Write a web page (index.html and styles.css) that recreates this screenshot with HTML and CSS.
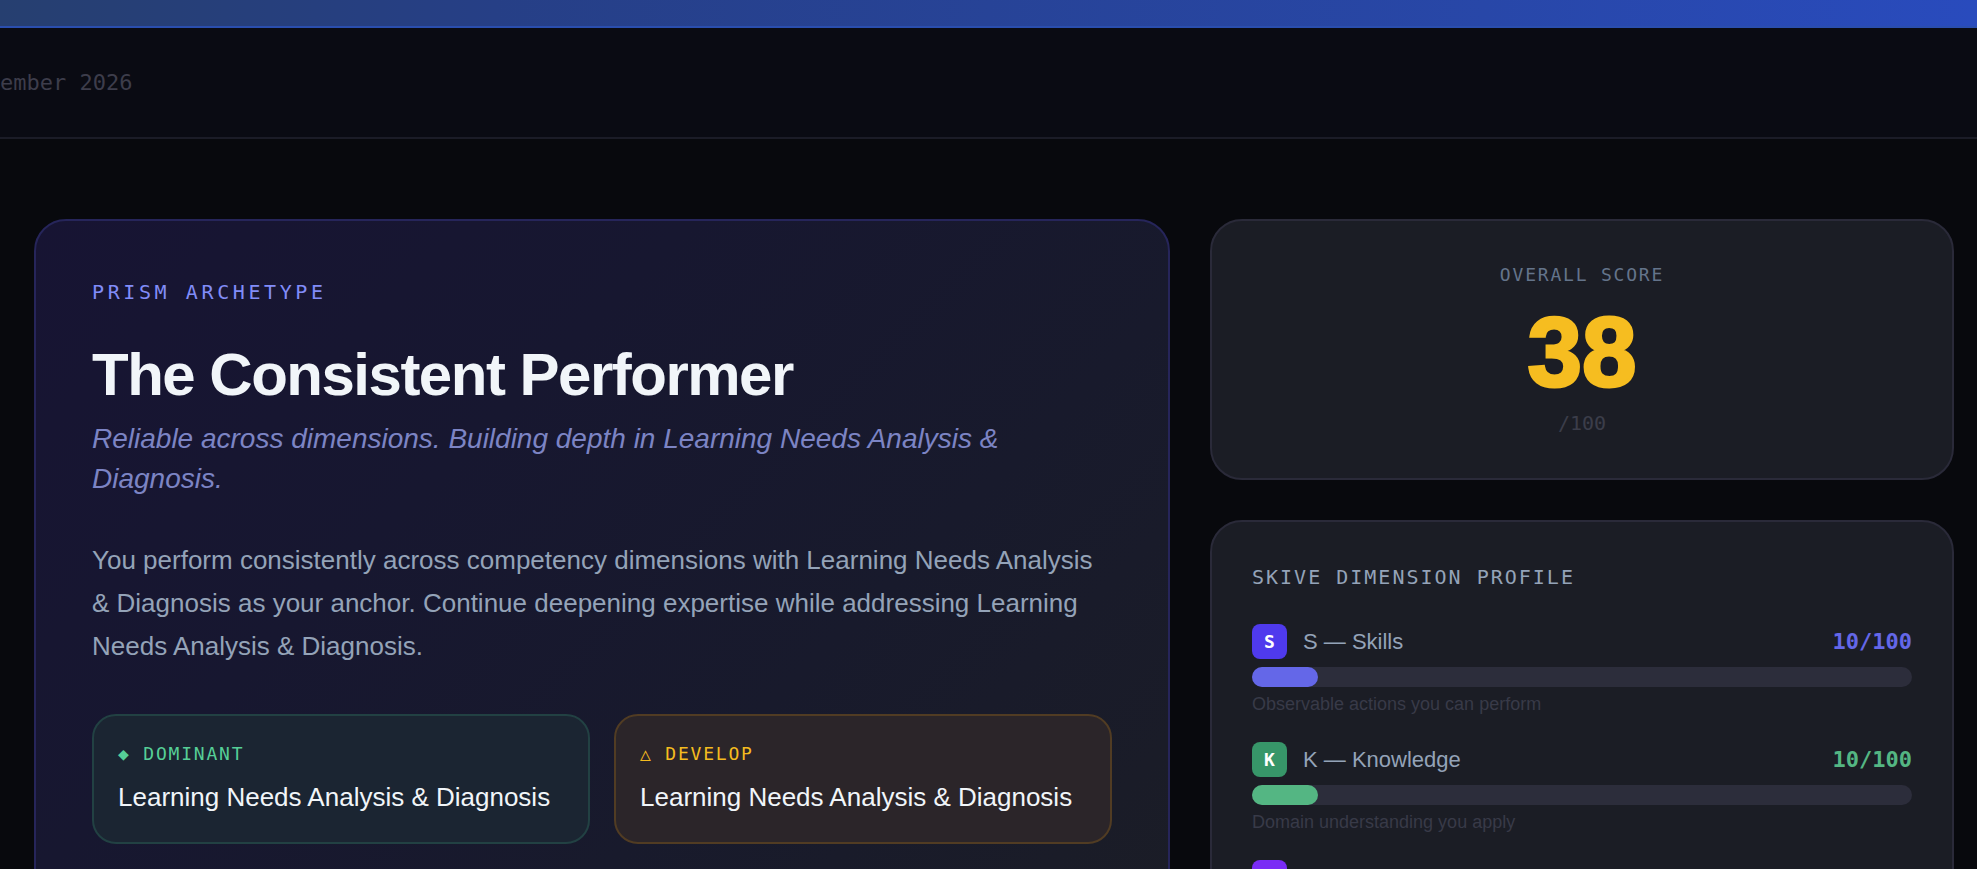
FILE: index.html
```html
<!DOCTYPE html>
<html lang="en">
<head>
<meta charset="utf-8">
<meta name="viewport" content="width=device-width, initial-scale=1">
<title>Prism Archetype Report</title>
<link rel="stylesheet" href="styles.css">
</head>
<body>
<div class="banner"></div>
<header class="meta"><span class="meta-date">ember 2026</span></header>
<main class="report">
  <section class="card archetype">
    <p class="eyebrow">PRISM ARCHETYPE</p>
    <h1 class="title">The Consistent Performer</h1>
    <p class="tagline">Reliable across dimensions. Building depth in Learning Needs Analysis &amp; Diagnosis.</p>
    <p class="summary">You perform consistently across competency dimensions with Learning Needs Analysis &amp; Diagnosis as your anchor. Continue deepening expertise while addressing Learning Needs Analysis &amp; Diagnosis.</p>
    <div class="traits">
      <div class="trait trait-dominant">
        <p class="trait-label">◆ DOMINANT</p>
        <p class="trait-value">Learning Needs Analysis &amp; Diagnosis</p>
      </div>
      <div class="trait trait-develop">
        <p class="trait-label">△ DEVELOP</p>
        <p class="trait-value">Learning Needs Analysis &amp; Diagnosis</p>
      </div>
    </div>
  </section>
  <div class="side">
    <section class="card score">
      <p class="score-label">OVERALL SCORE</p>
      <p class="score-value">38</p>
      <p class="score-max">/100</p>
    </section>
    <section class="card profile">
      <h2 class="profile-title">SKIVE DIMENSION PROFILE</h2>
      <ul class="dimensions">
        <li class="dimension skills">
          <div class="dimension-head"><span class="badge">S</span><span class="name">S — Skills</span><span class="points">10/100</span></div>
          <div class="track"><div class="fill" style="width:10%"></div></div>
          <p class="hint">Observable actions you can perform</p>
        </li>
        <li class="dimension knowledge">
          <div class="dimension-head"><span class="badge">K</span><span class="name">K — Knowledge</span><span class="points">10/100</span></div>
          <div class="track"><div class="fill" style="width:10%"></div></div>
          <p class="hint">Domain understanding you apply</p>
        </li>
        <li class="dimension third">
          <div class="dimension-head"><span class="badge"></span></div>
          <div class="track"><div class="fill" style="width:10%"></div></div>
        </li>
      </ul>
    </section>
  </div>
</main>
</body>
</html>
```
FILE: styles.css
```css
:root {
  --sans: "Liberation Sans", Arial, sans-serif;
  --mono: "DejaVu Sans Mono", "Liberation Mono", monospace;
}
* { box-sizing: border-box; }
html { height: 100%; }
body {
  margin: 0;
  height: 100%;
  overflow: hidden;
  background: #08090d;
  color: #f1f5f9;
  font-family: var(--sans);
}
h1, h2, p, ul { margin: 0; padding: 0; }
ul { list-style: none; }

.banner {
  height: 28px;
  background: linear-gradient(90deg, #263f70, #263f86 25%, #2847a8 75%, #294bbd);
  border-bottom: 2px solid #2a4eae;
}
.meta {
  padding: 40px 0;
  background: #0a0b13;
  border-bottom: 2px solid #1b1c27;
  font: 22px/29px var(--mono);
  color: #3d3d4b;
}
.meta-date { display: block; }

.report {
  display: grid;
  grid-template-columns: minmax(0, 142fr) minmax(0, 93fr);
  gap: 40px;
  padding: 80px 23px 80px 34px;
}
.card {
  border: 2px solid #2a2a39;
  border-radius: 32px;
  background: #1b1d25;
  padding: 40px;
}
.side { display: flex; flex-direction: column; gap: 40px; }

.archetype {
  padding: 56px;
  border-color: #26255a;
  background: linear-gradient(135deg, #171433, #171730 35%, #181a2c 65%, #1b1d26);
}
.eyebrow {
  font: 20px/30px var(--mono);
  letter-spacing: 0.18em;
  color: #818cf8;
}
.title {
  margin-top: 32px;
  font-size: 60px;
  line-height: 72px;
  letter-spacing: -0.025em;
}
.tagline {
  margin-top: 8px;
  font-size: 28px;
  line-height: 40px;
  font-style: italic;
  color: #7c84c4;
}
.summary {
  margin-top: 40px;
  font-size: 26px;
  line-height: 43px;
  color: #94a3b8;
}
.traits {
  display: grid;
  grid-template-columns: 1fr 1fr;
  gap: 24px;
  margin-top: 46px;
}
.trait {
  padding: 24px;
  border: 2px solid;
  border-radius: 24px;
}
.trait-dominant { background: #1b2532; border-color: #224143; }
.trait-develop { background: #2b2529; border-color: #513c23; }
.trait-label {
  font: 18px/28px var(--mono);
  letter-spacing: 0.1em;
}
.trait-dominant .trait-label { color: #56cf97; }
.trait-develop .trait-label { color: #f5bc1f; }
.trait-value { margin-top: 8px; font-size: 26px; line-height: 42px; }

.score { text-align: center; }
.score-label {
  font: 18px/27px var(--mono);
  letter-spacing: 0.1em;
  color: #64748b;
}
.score-value {
  margin: 16px 0 8px;
  font: bold 98px/96px var(--sans);
  color: #f6bd20;
  -webkit-text-stroke: 3px #f6bd20;
}
.score-max { font: 20px/30px var(--mono); color: #3b3d4a; }

.profile-title {
  font: 20px/30px var(--mono);
  letter-spacing: 0.1em;
  color: #94a3b8;
}
.dimensions { display: grid; gap: 24px; margin-top: 32px; }
.dimension-head { display: flex; align-items: center; gap: 16px; }
.badge {
  display: grid;
  place-items: center;
  width: 35px;
  height: 35px;
  border-radius: 8px;
  font: bold 18px/24px var(--mono);
  color: #fff;
}
.name { flex: 1; font-size: 22px; line-height: 33px; color: #94a3b8; }
.points { font: bold 22px/33px var(--mono); }
.track { height: 20px; margin-top: 8px; border-radius: 10px; background: #2c2d3b; }
.fill { height: 100%; border-radius: 10px; }
.hint { margin-top: 4px; font-size: 18px; line-height: 27px; color: #383a48; }

.skills .badge { background: #4f3aed; }
.skills .fill { background: #6467e8; }
.skills .points { color: #6467e8; }
.knowledge .badge { background: #379669; }
.knowledge .fill { background: #54b683; }
.knowledge .points { color: #54b683; }
.third .badge { background: #7a2cf5; }
.third .fill { background: #8b5cf6; }
```
